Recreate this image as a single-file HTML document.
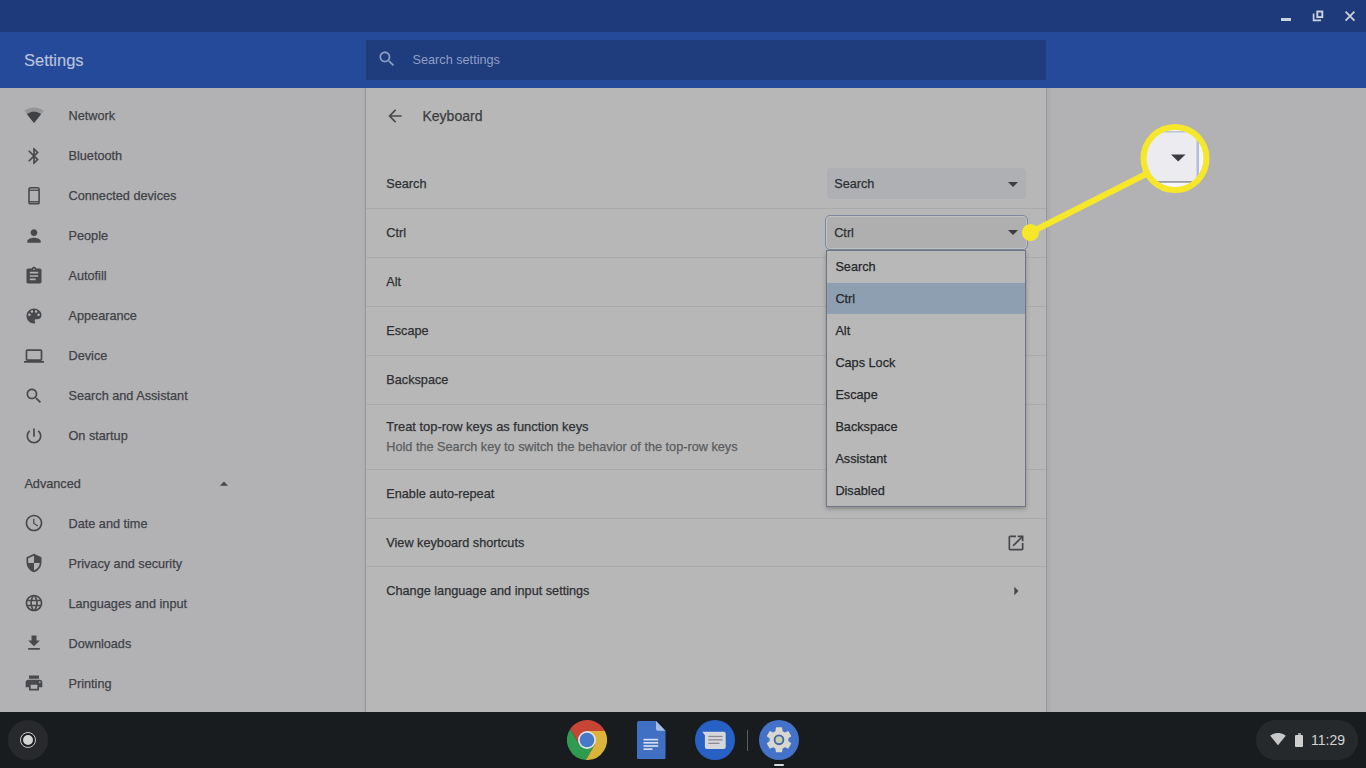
<!DOCTYPE html>
<html><head><meta charset="utf-8">
<style>
*{box-sizing:border-box}
html,body{margin:0;padding:0}
body{width:1366px;height:768px;overflow:hidden;position:relative;background:#b2b2b5;font-family:"Liberation Sans",sans-serif;color:#3b3d40}
.a{position:absolute}
.t{position:absolute;white-space:nowrap;-webkit-text-stroke-width:0.25px}
</style></head><body>

<div class="a" style="left:0;top:0;width:1366px;height:32px;background:#1f3a7b"></div>
<div class="a" style="left:0;top:32px;width:1366px;height:56px;background:#254a9a"></div>
<div class="a" style="left:1280.6px;top:18.4px;width:10.7px;height:3px;background:#cad2de"></div>
<svg class="a" style="left:1310px;top:8px;width:16px;height:16px" viewBox="1310 8 16 16"><rect x="1317.3" y="11.5" width="5" height="5.6" fill="none" stroke="#cad2de" stroke-width="1.9"/><path d="M1313.6 13.5 V20.4 H1321" fill="none" stroke="#cad2de" stroke-width="1.7"/></svg>
<svg class="a" style="left:1342px;top:8px;width:16px;height:16px" viewBox="1342 8 16 16"><path d="M1345.6 11.6 L1354.4 20.6 M1354.4 11.6 L1345.6 20.6" stroke="#cad2de" stroke-width="1.8"/></svg>
<div class="t" style="left:24px;top:50.28px;font-size:16.5px;line-height:20px;color:#bac5dc;-webkit-text-stroke-width:0.1px">Settings</div>
<div class="a" style="left:366px;top:40px;width:680px;height:40px;background:#1f3c7d"></div>
<svg class="a" style="left:377.0px;top:49.0px;width:20px;height:20px;fill:#8e9ec4;" viewBox="0 0 24 24"><path d="M15.5 14h-.79l-.28-.27C15.41 12.59 16 11.11 16 9.5 16 5.91 13.09 3 9.5 3S3 5.91 3 9.5 5.91 16 9.5 16c1.61 0 3.09-.59 4.23-1.57l.27.28v.79l5 4.99L20.49 19l-4.99-5zm-6 0C7.01 14 5 11.99 5 9.5S7.01 5 9.5 5 14 7.01 14 9.5 11.99 14 9.5 14z"/></svg>
<div class="t" style="left:412.5px;top:49.60px;font-size:12.7px;line-height:20px;color:#8f9fc5;-webkit-text-stroke-width:0">Search settings</div>
<svg class="a" style="left:24.0px;top:105.0px;width:20px;height:20px;fill:#949598;" viewBox="0 0 24 24"><path d="M12.01 21.49L23.64 7c-.45-.34-4.93-4-11.64-4C5.28 3 .81 6.66.36 7l11.63 14.49.01.01.01-.01z"/></svg>
<svg class="a" style="left:24px;top:105px;width:20px;height:20px;fill:#3f4043" viewBox="0 0 24 24"><path d="M3.53 10.95l8.46 10.54.01.01.01-.01 8.46-10.54C20.04 10.62 16.810 8 12 8c-4.81 0-8.04 2.62-8.47 2.95z"/></svg>
<div class="t" style="left:68.5px;top:105.60px;font-size:12.7px;line-height:20px;color:#404246;">Network</div>
<svg class="a" style="left:24.0px;top:145.5px;width:20px;height:20px;fill:#48494c;" viewBox="0 0 24 24"><path d="M17.71 7.71L12 2h-1v7.59L6.41 5 5 6.41 10.59 12 5 17.59 6.41 19 11 14.41V22h1l5.71-5.71-4.3-4.29 4.3-4.29zM13 5.830l1.88 1.88L13 9.59V5.83zm1.88 10.46L13 18.17v-3.76l1.88 1.88z"/></svg>
<div class="t" style="left:68.5px;top:145.60px;font-size:12.7px;line-height:20px;color:#404246;">Bluetooth</div>
<svg class="a" style="left:24px;top:185px;width:20px;height:20px" viewBox="0 0 20 20"><rect x="5" y="2.8" width="10.1" height="16" rx="1.4" fill="none" stroke="#48494c" stroke-width="1.6"/><rect x="5" y="4.6" width="10" height="1.3" fill="#48494c"/><rect x="5" y="16.1" width="10" height="1.4" fill="#48494c"/></svg>
<div class="t" style="left:68.5px;top:185.60px;font-size:12.7px;line-height:20px;color:#404246;">Connected devices</div>
<svg class="a" style="left:24.0px;top:225.5px;width:20px;height:20px;fill:#48494c;" viewBox="0 0 24 24"><path d="M12 12c2.21 0 4-1.79 4-4s-1.79-4-4-4-4 1.79-4 4 1.79 4 4 4zm0 2c-2.67 0-8 1.34-8 4v2h16v-2c0-2.660-5.33-4-8-4z"/></svg>
<div class="t" style="left:68.5px;top:225.60px;font-size:12.7px;line-height:20px;color:#404246;">People</div>
<svg class="a" style="left:24.0px;top:265.5px;width:20px;height:20px;fill:#48494c;" viewBox="0 0 24 24"><path d="M19 3h-4.18C14.4 1.84 13.3 1 12 1c-1.3 0-2.4.84-2.82 2H5c-1.1 0-2 .9-2 2v14c0 1.1.9 2 2 2h14c1.1 0 2-.9 2-2V5c0-1.1-.9-2-2-2zm-7 0c.55 0 1 .45 1 1s-.45 1-1 1-1-.45-1-1 .45-1 1-1zm2 14H7v-2h7v2zm3-4H7v-2h10v2zm0-4H7V7h10v2z"/></svg>
<div class="t" style="left:68.5px;top:265.60px;font-size:12.7px;line-height:20px;color:#404246;">Autofill</div>
<svg class="a" style="left:24.0px;top:305.5px;width:20px;height:20px;fill:#48494c;" viewBox="0 0 24 24"><path d="M12 3c-4.97 0-9 4.03-9 9s4.03 9 9 9c.83 0 1.5-.67 1.5-1.5 0-.39-.15-.74-.39-1.01-.23-.26-.38-.61-.38-.99 0-.83.67-1.5 1.5-1.5H16c2.76 0 5-2.24 5-5 0-4.42-4.03-8-9-8zm-5.5 9c-.83 0-1.5-.67-1.5-1.5S5.67 9 6.5 9 8 9.67 8 10.5 7.33 12 6.5 12zm3-4C8.67 8 8 7.33 8 6.5S8.67 5 9.5 5s1.5.67 1.5 1.5S10.33 8 9.5 8zm5 0c-.83 0-1.5-.67-1.5-1.5S13.67 5 14.5 5s1.5.67 1.5 1.5S15.33 8 14.5 8zm3 4c-.83 0-1.5-.67-1.5-1.5S16.67 9 17.5 9s1.5.67 1.5 1.5-.67 1.5-1.5 1.5z"/></svg>
<div class="t" style="left:68.5px;top:305.60px;font-size:12.7px;line-height:20px;color:#404246;">Appearance</div>
<svg class="a" style="left:24.0px;top:345.5px;width:20px;height:20px;fill:#48494c;" viewBox="0 0 24 24"><path d="M20 18c1.1 0 1.99-.9 1.99-2L22 6c0-1.1-.9-2-2-2H4c-1.1 0-2 .9-2 2v10c0 1.1.9 2 2 2H0v2h24v-2h-4zM4 6h16v10H4V6z"/></svg>
<div class="t" style="left:68.5px;top:345.60px;font-size:12.7px;line-height:20px;color:#404246;">Device</div>
<svg class="a" style="left:24.0px;top:385.5px;width:20px;height:20px;fill:#48494c;" viewBox="0 0 24 24"><path d="M15.5 14h-.79l-.28-.27C15.41 12.59 16 11.11 16 9.5 16 5.91 13.09 3 9.5 3S3 5.91 3 9.5 5.91 16 9.5 16c1.61 0 3.09-.59 4.23-1.57l.27.28v.79l5 4.99L20.49 19l-4.99-5zm-6 0C7.01 14 5 11.99 5 9.5S7.01 5 9.5 5 14 7.01 14 9.5 11.99 14 9.5 14z"/></svg>
<div class="t" style="left:68.5px;top:385.60px;font-size:12.7px;line-height:20px;color:#404246;">Search and Assistant</div>
<svg class="a" style="left:24.0px;top:425.5px;width:20px;height:20px;fill:#48494c;" viewBox="0 0 24 24"><path d="M13 3h-2v10h2V3zm4.83 2.17l-1.42 1.42C17.99 7.86 19 9.81 19 12c0 3.87-3.13 7-7 7s-7-3.13-7-7c0-2.19 1.01-4.14 2.58-5.42L6.17 5.17C4.23 6.82 3 9.26 3 12c0 4.97 4.03 9 9 9s9-4.03 9-9c0-2.74-1.23-5.18-3.17-6.83z"/></svg>
<div class="t" style="left:68.5px;top:425.60px;font-size:12.7px;line-height:20px;color:#404246;">On startup</div>
<div class="t" style="left:24.4px;top:473.60px;font-size:12.7px;line-height:20px;color:#404246;">Advanced</div>
<svg class="a" style="left:214px;top:474px;width:20px;height:20px;fill:#48494c" viewBox="0 0 24 24"><path d="M7 14l5-5 5 5z"/></svg>
<svg class="a" style="left:24.0px;top:513.0px;width:20px;height:20px;fill:#48494c;" viewBox="0 0 24 24"><path d="M11.99 2C6.47 2 2 6.48 2 12s4.47 10 9.99 10C17.52 22 22 17.52 22 12S17.52 2 11.99 2zM12 20c-4.42 0-8-3.58-8-8s3.58-8 8-8 8 3.58 8 8-3.58 8-8 8zm.5-13H11v6l5.25 3.15.75-1.23-4.5-2.67z"/></svg>
<div class="t" style="left:68.5px;top:513.60px;font-size:12.7px;line-height:20px;color:#404246;">Date and time</div>
<svg class="a" style="left:24.0px;top:553.0px;width:20px;height:20px;fill:#48494c;" viewBox="0 0 24 24"><path d="M12 1L3 5v6c0 5.55 3.84 10.74 9 12 5.16-1.26 9-6.45 9-12V5l-9-4zm0 10.99h7c-.53 4.12-3.28 7.79-7 8.94V12H5V6.3l7-3.11v8.8z"/></svg>
<div class="t" style="left:68.5px;top:553.60px;font-size:12.7px;line-height:20px;color:#404246;">Privacy and security</div>
<svg class="a" style="left:24.0px;top:593.0px;width:20px;height:20px;fill:#48494c;" viewBox="0 0 24 24"><path d="M11.99 2C6.47 2 2 6.48 2 12s4.47 10 9.99 10C17.52 22 22 17.52 22 12S17.52 2 11.99 2zm6.93 6h-2.95c-.32-1.25-.78-2.45-1.38-3.56 1.84.63 3.37 1.91 4.33 3.56zM12 4.04c.83 1.2 1.48 2.53 1.91 3.96h-3.82c.43-1.43 1.08-2.76 1.91-3.96zM4.26 14C4.1 13.36 4 12.69 4 12s.1-1.36.26-2h3.38c-.08.66-.14 1.32-.14 2 0 .68.06 1.34.14 2H4.26zm.82 2h2.95c.32 1.25.78 2.45 1.38 3.56-1.84-.63-3.37-1.9-4.33-3.56zm2.95-8H5.08c.96-1.66 2.49-2.93 4.33-3.56C8.81 5.55 8.35 6.75 8.03 8zM12 19.96c-.83-1.2-1.48-2.53-1.91-3.96h3.82c-.43 1.43-1.08 2.76-1.91 3.96zM14.34 14H9.66c-.09-.66-.16-1.32-.16-2 0-.68.07-1.35.16-2h4.68c.09.65.16 1.32.16 2 0 .68-.07 1.34-.16 2zm.25 5.56c.6-1.11 1.06-2.31 1.38-3.56h2.95c-.96 1.65-2.49 2.93-4.33 3.56zM16.36 14c.08-.66.14-1.32.14-2 0-.68-.06-1.34-.14-2h3.38c.16.64.26 1.31.26 2s-.1 1.36-.26 2h-3.38z"/></svg>
<div class="t" style="left:68.5px;top:593.60px;font-size:12.7px;line-height:20px;color:#404246;">Languages and input</div>
<svg class="a" style="left:24.0px;top:633.0px;width:20px;height:20px;fill:#48494c;" viewBox="0 0 24 24"><path d="M19 9h-4V3H9v6H5l7 7 7-7zM5 18v2h14v-2H5z"/></svg>
<div class="t" style="left:68.5px;top:633.60px;font-size:12.7px;line-height:20px;color:#404246;">Downloads</div>
<svg class="a" style="left:24.0px;top:673.0px;width:20px;height:20px;fill:#48494c;" viewBox="0 0 24 24"><path d="M19 8H5c-1.66 0-3 1.34-3 3v6h4v4h12v-4h4v-6c0-1.66-1.34-3-3-3zm-3 11H8v-5h8v5zm3-7c-.55 0-1-.45-1-1s.45-1 1-1 1 .45 1 1-.45 1-1 1zm-1-9H6v4h12V3z"/></svg>
<div class="t" style="left:68.5px;top:673.60px;font-size:12.7px;line-height:20px;color:#404246;">Printing</div>
<div class="a" style="left:362px;top:88px;width:4px;height:624px;background:linear-gradient(to right,rgba(0,0,0,0),rgba(0,0,0,.05))"></div>
<div class="a" style="left:1047px;top:88px;width:5px;height:624px;background:linear-gradient(to left,rgba(0,0,0,0),rgba(0,0,0,.05))"></div>
<div class="a" style="left:365px;top:88px;width:682px;height:624px;background:#b7b7b7;border-left:1px solid #97989c;border-right:1px solid #97989c"></div>
<svg class="a" style="left:384.5px;top:105.5px;width:20px;height:20px;fill:#4a4b4e;" viewBox="0 0 24 24"><path d="M20 11H7.83l5.59-5.59L12 4l-8 8 8 8 1.41-1.41L7.83 13H20v-2z"/></svg>
<div class="t" style="left:422.5px;top:106.15px;font-size:14px;line-height:20px;color:#3b3d40;">Keyboard</div>
<div class="a" style="left:366px;top:208px;width:680px;height:1px;background:#aaaaab"></div>
<div class="a" style="left:366px;top:257px;width:680px;height:1px;background:#aaaaab"></div>
<div class="a" style="left:366px;top:306px;width:680px;height:1px;background:#aaaaab"></div>
<div class="a" style="left:366px;top:355px;width:680px;height:1px;background:#aaaaab"></div>
<div class="a" style="left:366px;top:404px;width:680px;height:1px;background:#aaaaab"></div>
<div class="a" style="left:366px;top:469px;width:680px;height:1px;background:#aaaaab"></div>
<div class="a" style="left:366px;top:518px;width:680px;height:1px;background:#aaaaab"></div>
<div class="a" style="left:366px;top:566px;width:680px;height:1px;background:#aaaaab"></div>
<div class="t" style="left:386.3px;top:174.10px;font-size:12.7px;line-height:20px;color:#2e3033;">Search</div>
<div class="t" style="left:386.3px;top:223.10px;font-size:12.7px;line-height:20px;color:#2e3033;">Ctrl</div>
<div class="t" style="left:386.3px;top:272.10px;font-size:12.7px;line-height:20px;color:#2e3033;">Alt</div>
<div class="t" style="left:386.3px;top:321.10px;font-size:12.7px;line-height:20px;color:#2e3033;">Escape</div>
<div class="t" style="left:386.3px;top:370.10px;font-size:12.7px;line-height:20px;color:#2e3033;">Backspace</div>
<div class="t" style="left:386.3px;top:416.93px;font-size:12.9px;line-height:20px;color:#2e3033;">Treat top-row keys as function keys</div>
<div class="t" style="left:386.3px;top:437.00px;font-size:12.7px;line-height:20px;color:#5b5d60;">Hold the Search key to switch the behavior of the top-row keys</div>
<div class="t" style="left:386.3px;top:484.10px;font-size:12.7px;line-height:20px;color:#2e3033;">Enable auto-repeat</div>
<div class="t" style="left:386.3px;top:533.10px;font-size:12.7px;line-height:20px;color:#2e3033;">View keyboard shortcuts</div>
<div class="t" style="left:386.3px;top:581.10px;font-size:12.7px;line-height:20px;color:#2e3033;">Change language and input settings</div>
<svg class="a" style="left:1006.0px;top:532.5px;width:20px;height:20px;fill:#46474a;" viewBox="0 0 24 24"><path d="M19 19H5V5h7V3H5c-1.11 0-2 .9-2 2v14c0 1.1.89 2 2 2h14c1.1 0 2-.9 2-2v-7h-2v7zM14 3v2h3.59l-9.83 9.83 1.41 1.41L19 6.41V10h2V3h-7z"/></svg>
<svg class="a" style="left:1006px;top:581px;width:20px;height:20px;fill:#46474a" viewBox="0 0 24 24"><path d="M10 17l5-5-5-5v10z"/></svg>
<div class="a" style="left:827px;top:168px;width:199px;height:31px;background:#aeb0b3;border-radius:4px"></div>
<div class="t" style="left:834.2px;top:173.60px;font-size:12.7px;line-height:20px;color:#2e3033;">Search</div>
<svg class="a" style="left:1001px;top:172px;width:24px;height:24px;fill:#3c3d40" viewBox="0 0 24 24"><path d="M7 10l5 5 5-5z"/></svg>
<div class="a" style="left:824.5px;top:215px;width:203px;height:35px;background:#afafb0;border:1.8px solid #7b889c;border-radius:5px;box-shadow:inset 0 0 0 1px rgba(225,230,240,.35)"></div>
<div class="t" style="left:834.2px;top:222.60px;font-size:12.7px;line-height:20px;color:#2e3033;">Ctrl</div>
<svg class="a" style="left:1001px;top:220px;width:24px;height:24px;fill:#3c3d40" viewBox="0 0 24 24"><path d="M7 10l5 5 5-5z"/></svg>
<div class="a" style="left:826px;top:249.5px;width:200px;height:257px;background:#b8b8b8;border:1px solid #6f7582;box-shadow:0 2px 4px rgba(0,0,0,.25)"></div>
<div class="a" style="left:827px;top:282.5px;width:198px;height:31.5px;background:#8d9fb1"></div>
<div class="t" style="left:835.4px;top:256.90px;font-size:12.7px;line-height:20px;color:#26282b;">Search</div>
<div class="t" style="left:835.4px;top:288.90px;font-size:12.7px;line-height:20px;color:#26282b;">Ctrl</div>
<div class="t" style="left:835.4px;top:320.90px;font-size:12.7px;line-height:20px;color:#26282b;">Alt</div>
<div class="t" style="left:835.4px;top:352.90px;font-size:12.7px;line-height:20px;color:#26282b;">Caps Lock</div>
<div class="t" style="left:835.4px;top:384.90px;font-size:12.7px;line-height:20px;color:#26282b;">Escape</div>
<div class="t" style="left:835.4px;top:416.90px;font-size:12.7px;line-height:20px;color:#26282b;">Backspace</div>
<div class="t" style="left:835.4px;top:448.90px;font-size:12.7px;line-height:20px;color:#26282b;">Assistant</div>
<div class="t" style="left:835.4px;top:480.90px;font-size:12.7px;line-height:20px;color:#26282b;">Disabled</div>
<svg class="a" style="left:0;top:0;width:1366px;height:768px;overflow:visible" viewBox="0 0 1366 768">
<defs><clipPath id="cc"><circle cx="1175" cy="158.5" r="29"/></clipPath></defs>
<line x1="1030.5" y1="232.5" x2="1150" y2="172" stroke="#f6e72a" stroke-width="6" stroke-linecap="round"/>
<circle cx="1030.5" cy="232.5" r="8.6" fill="#f6e72a"/>
<g clip-path="url(#cc)">
<rect x="1140" y="124" width="70" height="70" fill="#f6f6fa"/>
<rect x="1140" y="131" width="58" height="51" fill="#ececf0"/>
<rect x="1140" y="131" width="58" height="1.5" fill="#b9c3e0"/>
<rect x="1196.5" y="131" width="2.5" height="51" fill="#b0bde0"/>
<rect x="1140" y="181" width="58" height="1.8" fill="#9a9ca6"/>
<path d="M1171 154.5 L1185.5 154.5 L1178.2 161.5 Z" fill="#3c3d42"/>
</g>
<circle cx="1175" cy="158.5" r="31.5" fill="none" stroke="#f6e72a" stroke-width="6"/>
</svg>
<div class="a" style="left:0;top:712px;width:1366px;height:56px;background:#181c1f"></div>
<div class="a" style="left:8px;top:720px;width:40px;height:40px;border-radius:50%;background:#27292c"></div>
<div class="a" style="left:20px;top:732px;width:16px;height:16px;border-radius:50%;border:1.2px solid #c8c8c8;background:#1a1c1e"></div>
<div class="a" style="left:22.7px;top:734.7px;width:10.6px;height:10.6px;border-radius:50%;background:#d4d4d4"></div>
<svg class="a" style="left:567px;top:720px;width:40px;height:40px" viewBox="0 0 40 40"><path d="M20 20 L20.00 11.00 L37.86 11.00 A20 20 0 0 0 3.28 9.03 L12.21 24.50 Z" fill="#c84434"/><path d="M20 20 L12.21 24.50 L3.28 9.03 A20 20 0 0 0 18.86 39.97 L27.79 24.50 Z" fill="#2f9a50"/><path d="M20 20 L27.79 24.50 L18.86 39.97 A20 20 0 0 0 37.86 11.00 L20.00 11.00 Z" fill="#dbb33b"/><circle cx="20" cy="20" r="9" fill="#dfe3ea"/><circle cx="20" cy="20" r="7.3" fill="#4779c8"/></svg>
<svg class="a" style="left:637px;top:720.5px;width:28.5px;height:38.5px" viewBox="0 0 30 40" preserveAspectRatio="none">
<path d="M2 0 H20 L30 10 V38 A2 2 0 0 1 28 40 H2 A2 2 0 0 1 0 38 V2 A2 2 0 0 1 2 0 Z" fill="#4070c4"/>
<path d="M20 0 L30 10 H22 A2 2 0 0 1 20 8 Z" fill="#a9bde3"/>
<rect x="6.8" y="18.5" width="15.5" height="1.7" fill="#d8e0f0"/>
<rect x="6.8" y="21.8" width="15.5" height="1.7" fill="#d8e0f0"/>
<rect x="6.8" y="25.1" width="15.5" height="1.7" fill="#d8e0f0"/>
<rect x="6.8" y="28.4" width="9.5" height="1.7" fill="#d8e0f0"/>
</svg>
<svg class="a" style="left:695px;top:720px;width:40px;height:40px" viewBox="0 0 40 40">
<circle cx="20" cy="20" r="20" fill="#2861c6"/>
<path d="M7.3 11.7 H28.7 A2 2 0 0 1 30.7 13.7 V26.9 A2 2 0 0 1 28.7 28.9 H11.9 A2 2 0 0 1 9.9 26.9 V15.2 Z" fill="#d6d7db"/>
<rect x="13.3" y="15.8" width="14.3" height="1.3" fill="#8a8c92"/>
<rect x="13.3" y="19.2" width="14.3" height="1.3" fill="#8a8c92"/>
<rect x="13.3" y="22.7" width="11.2" height="1.3" fill="#8a8c92"/>
</svg>
<div class="a" style="left:747px;top:730px;width:1px;height:21px;background:#5a5c5e"></div>
<svg class="a" style="left:759px;top:720px;width:40px;height:40px" viewBox="0 0 40 40">
<circle cx="20" cy="20" r="20" fill="#4472c8"/>
<g transform="translate(20 19.8) scale(1.3) translate(-12 -12)">
<path fill="#d9d8d0" d="M19.14 12.94c.04-.3.06-.61.06-.94 0-.32-.02-.64-.07-.94l2.03-1.58c.18-.14.23-.41.12-.61l-1.92-3.32c-.12-.22-.37-.29-.59-.22l-2.39.96c-.5-.38-1.03-.7-1.62-.94l-.36-2.54c-.04-.24-.24-.41-.48-.41h-3.84c-.24 0-.43.17-.47.41l-.36 2.54c-.59.24-1.13.57-1.62.94l-2.39-.96c-.22-.08-.47 0-.59.22L2.74 8.87c-.12.21-.08.47.12.61l2.03 1.58c-.05.3-.09.63-.09.94s.02.64.07.94l-2.03 1.58c-.18.14-.23.41-.12.61l1.92 3.32c.12.22.37.29.59.22l2.39-.96c.5.38 1.03.7 1.62.94l.36 2.54c.05.24.24.41.48.41h3.84c.24 0 .44-.17.47-.41l.36-2.54c.59-.24 1.13-.56 1.62-.94l2.39.96c.22.08.47 0 .59-.22l1.92-3.32c.12-.22.07-.47-.12-.61l-2.01-1.58z"/>
<circle cx="12" cy="12" r="4.1" fill="#3e63b0"/>
<circle cx="12" cy="12" r="2.7" fill="#c9cfa8"/>
</g>
</svg>
<div class="a" style="left:774px;top:764px;width:10px;height:2px;background:#d8d8d8;border-radius:1px"></div>
<div class="a" style="left:1256px;top:720px;width:102px;height:40px;border-radius:20px;background:#26292c"></div>
<svg class="a" style="left:1270px;top:731px;width:16px;height:16px;fill:#c8c8c8" viewBox="0 0 24 24"><path d="M12.01 21.49L23.64 7c-.45-.34-4.93-4-11.64-4C5.28 3 .81 6.66.36 7l11.63 14.49.01.01.01-.01z"/></svg>
<div class="a" style="left:1297.5px;top:733px;width:3.5px;height:2px;background:#9a9a9a"></div>
<div class="a" style="left:1295px;top:735px;width:8px;height:11.7px;background:#cfcfcf;border-radius:1px"></div>
<div class="t" style="left:1311px;top:730.15px;font-size:14px;line-height:20px;color:#d2d2d2;-webkit-text-stroke-width:0">11:29</div>
</body></html>
